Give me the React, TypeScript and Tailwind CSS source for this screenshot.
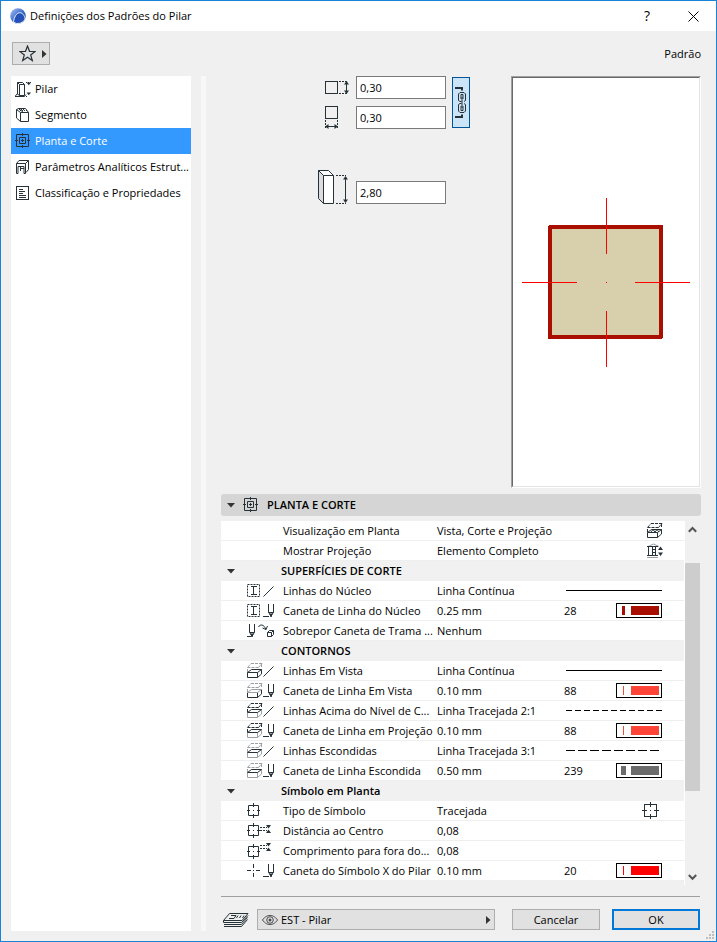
import { useState, ReactNode } from 'react';

const INK = '#263238';
const FAINT = '#9aa0a4';

const AppLogo = () => (
  <svg width="16" height="16" viewBox="0 0 16 16" aria-hidden="true">
    <defs>
      <linearGradient id="logo" x1="0" y1="0" x2="1" y2="1">
        <stop offset="0" stopColor="#a9c3f2" />
        <stop offset="0.5" stopColor="#3f6fd0" />
        <stop offset="1" stopColor="#16348f" />
      </linearGradient>
    </defs>
    <circle cx="8" cy="8" r="7.8" fill="url(#logo)" />
    <path
      d="M3.500 14.200C4 9 6.500 5 9.500 4.800c3.200-.2 5 2.700 5.700 6.200A8 8 0 0 1 3.500 14.200z"
      fill="#2450b8"
      stroke="#fff"
      strokeWidth="0.900"
    />
  </svg>
);

const Triangle = ({ down = false }: { down?: boolean }) => (
  <svg width="8" height="8" viewBox="0 0 8 8" fill="#333" aria-hidden="true">
    {down ? <path d="M0 2h8L4 6.500z" /> : <path d="M2 0v8l4.500-4z" />}
  </svg>
);

const StarIcon = () => (
  <svg width="17" height="17" viewBox="0 0 17 17" fill="none" stroke={INK} strokeWidth="1.200" aria-hidden="true">
    <path d="M8.500 1l2 5.300 5.600.2-4.400 3.500 1.600 5.500-4.800-3.200-4.800 3.200 1.600-5.500L.9 6.500l5.600-.2z" />
  </svg>
);

const ColumnIcon = () => (
  <svg width="16" height="16" viewBox="0 0 16 16" fill="none" stroke={INK} aria-hidden="true">
    <path d="M2.500 13V1.500h5l2 2v11h-5zM4.500 14.500v-11h5M4.500 3.500l-2-2M2.500 13H2L0 15.500h9.500l1.500-2" />
    <path d="M11 1.500h5M11 15.500h2" strokeDasharray="1 1" />
    <path d="M11.500 1.500h4.500l-2.200 2.700zM11.500 11.500h4.500l-2.200 2.700z" fill={INK} stroke="none" />
  </svg>
);

const SegmentIcon = () => (
  <svg width="16" height="16" viewBox="0 0 16 16" fill="none" stroke={INK} aria-hidden="true">
    <path d="M5.500 5.500h8v9h-8zM5.500 14.500l-4-3.500V2.500l4 3M1.500 2.500l2-1h7l3 4M3.500 1.500l5 4" />
    <path d="M4 2.500h6M5 3.500h7" strokeDasharray="1 1" />
  </svg>
);

const PlanIcon = () => (
  <svg width="16" height="16" viewBox="0 0 16 16" fill="none" stroke={INK} aria-hidden="true">
    <path d="M1.500 1.500h12v12h-12zM4.500 4.500h6v6h-6zM7.500 0v3M7.500 12v3M0 7.500h3M12 7.500h3M6 7.500h3M7.500 6v3" />
  </svg>
);

const FrameIcon = () => (
  <svg width="16" height="16" viewBox="0 0 16 16" fill="none" stroke={INK} aria-hidden="true">
    <path d="M1.500 4.500l2.500-3h9.500v9l-2.500 3M1.500 4.500h9v10h-1.500v-7h-6v7H1.500zM10.500 4.500l3-3M5.500 8v4M5.500 9.500H9" />
  </svg>
);

const ListIcon = () => (
  <svg width="16" height="16" viewBox="0 0 16 16" fill="none" stroke={INK} shapeRendering="crispEdges" aria-hidden="true">
    <path d="M1.500 1.500h12v13h-12zM4 4.500h4M4 6.500h6M4 8.500h4M4 10.500h7M4 12.500h7" />
  </svg>
);

const DepthIcon = () => (
  <svg width="24" height="15" viewBox="0 0 24 15" fill="none" stroke={INK} aria-hidden="true">
    <path d="M.5 1.500h12v12H.5z" shapeRendering="crispEdges" />
    <path d="M14 1.500h9M14 13.500h9" strokeDasharray="2 1" />
    <path d="M21.500 2v11" />
    <path d="M21.500 1l2.500 3.500h-5zM21.500 14l2.500-3.500h-5z" fill={INK} stroke="none" />
  </svg>
);

const WidthIcon = () => (
  <svg width="24" height="23" viewBox="0 0 24 23" fill="none" stroke={INK} aria-hidden="true">
    <path d="M.5.5h12v12H.5z" shapeRendering="crispEdges" />
    <path d="M.5 14v9M12.500 14v9" strokeDasharray="2 1" />
    <path d="M1 20.500h11" />
    <path d="M0 20.500l3.500-2.500v5zM13 20.500l-3.500-2.500v5z" fill={INK} stroke="none" />
  </svg>
);

const HeightIcon = () => (
  <svg width="32" height="35" viewBox="0 0 32 35" stroke={INK} aria-hidden="true">
    <path d="M1.500 1.500l5 5v28l-5-5z" fill="#dcdcdc" />
    <path d="M1.500 1.500h10l5 5h-10z" fill="#fff" />
    <path d="M6.500 6.500h10v28h-10z" fill="#fff" />
    <path d="M19 6.500h10M19 34.500h10" strokeDasharray="2 1" fill="none" />
    <path d="M28.500 8v25" fill="none" />
    <path d="M28.500 7l2.500 3.500h-5zM28.500 34l2.500-3.500h-5z" fill={INK} stroke="none" />
  </svg>
);

const ChainIcon = () => (
  <svg width="14" height="35" viewBox="0 0 14 35" fill="none" stroke={INK} aria-hidden="true">
    <path d="M1 3h7v2.500M1 32h7v-2.500" strokeWidth="2" />
    <path d="M7.500 16.500H6l-1.500-1V9L6 7.500h4L11.500 9v6.500l-1.500 1M7.500 18.500H6l-1.500 1V26l1.500 1.500h4l1.500-1.500v-6.500l-1.500-1" />
    <path d="M7 14V9.500h2V14M7 21v4.500h2V21M8 12v11" />
  </svg>
);

const RowIcon = ({ children }: { children: ReactNode }) => (
  <svg width="28" height="16" viewBox="0 0 28 16" fill="none" stroke={INK} className="block" aria-hidden="true">
    {children}
  </svg>
);

const Core = () => (
  <>
    <path d="M.5 1.500h12v12H.5z" strokeDasharray="2 1" />
    <path d="M4 3.500h6M6.500 3.500v8M4 11.500h6" />
  </>
);

const Stroke = () => <path d="M16.500 13.500l10-10" />;

const Pen = () => (
  <>
    <path d="M21.500 1v8l2 3.500h1l2-3.500V1M16 13.500h6M21.500 9.500h5" />
    <path d="M23 11h2l-1 3z" fill={INK} />
  </>
);

const Slab = ({ top = FAINT, base = FAINT, cut = INK }: { top?: string; base?: string; cut?: string }) => (
  <>
    <path d="M4 .5h11M.5 4.500h11M.5 4.500L4 .5M11.500 4.500L15 .5M.5 6v3M14.500 1v4" stroke={top} strokeDasharray="3 1" />
    <path d="M.5 9.500v5h10v-5M10.500 14.500l4-3.500V6.500" stroke={base} />
    <path d="M.5 9.500h10l4-3h-10z" stroke={cut} />
  </>
);

const Target = ({ y = 0 }: { y?: number }) => (
  <path d={`M1.500 ${y + 2.5}h10v10h-10zM6.500 ${y}v4M6.500 ${y + 11}v4M0 ${y + 7.5}h3M10 ${y + 7.5}h3M6 ${y + 7.5}h1`} />
);

const Spacing = ({ y }: { y: number }) => (
  <>
    <path d={`M13 ${y}.5h7M13 ${y + 3}.5h7`} strokeDasharray="2 1" />
    <path d={`M19 ${y - 2}h5l-2.500 3.500zM19 ${y + 6}h5l-2.500-3.500z`} fill={INK} stroke="none" />
  </>
);

const SlabChoiceIcon = () => (
  <svg width="16" height="16" viewBox="0 0 16 16" fill="none" stroke={INK} aria-hidden="true">
    <Slab top={INK} base={INK} />
    <path d="M4 9l2-2.500L8 9l2-2.500L12 9" />
  </svg>
);

const StoryIcon = () => (
  <svg width="16" height="16" viewBox="0 0 16 16" fill="none" stroke={INK} aria-hidden="true">
    <path d="M1 3.500L6.500 1 12 3.500" stroke={FAINT} />
    <path d="M0 3.500h11M1.500 3.500v9M0 12.500h11M5.500 3.500v9M8.500 3.500v9M5.500 6.500h3M5.500 9.500h3" />
    <path d="M0 14.500h11" stroke={FAINT} />
    <path d="M11 7h5l-2.500-3.500zM11 9.500h5L13.500 13z" fill={INK} stroke="none" />
  </svg>
);

const SymbolIcon = () => (
  <svg width="17" height="17" viewBox="0 0 17 17" fill="none" stroke={INK} shapeRendering="crispEdges" aria-hidden="true">
    <path d="M2.500 2.500h12v12h-12zM8.500 0v5M8.500 12v5M0 8.500h5M12 8.500h5M8 8.500h1" />
  </svg>
);

const LayersIcon = () => (
  <svg width="26" height="16" viewBox="0 0 26 16" fill="none" stroke={INK} aria-hidden="true">
    <path d="M6.500 1.500h18.500l-6 7H.5zM.5 8.500v2h18l6.500-7M1 12.500h17.500l6-7M1 14.500h17.500l6-7" />
    <path d="M8 3.500h5l-2 3H6M15 3.500l-1.500 2.500M18 3.500L16.500 6M21 3.500L19.500 6" />
  </svg>
);

const EyeIcon = () => (
  <svg width="16" height="12" viewBox="0 0 16 12" fill="none" stroke="#4a4a4a" aria-hidden="true">
    <path d="M.5 6C3 2.500 5.500 1.500 8 1.500S13 2.500 15.500 6C13 9.500 10.500 10.500 8 10.500S3 9.500.5 6z" />
    <circle cx="8" cy="6" r="3.300" />
    <circle cx="8" cy="6" r="1.500" fill="#4a4a4a" stroke="none" />
  </svg>
);

const Chevron = ({ up = false }: { up?: boolean }) => (
  <svg width="9" height="8" viewBox="0 0 9 8" fill="none" stroke="#555" strokeWidth="2" aria-hidden="true">
    {up ? <path d="M.8 5.800L4.500 2l3.700 3.800" /> : <path d="M.8 2l3.700 3.800L8.200 2" />}
  </svg>
);

const PenSample = ({ color, weight }: { color: string; weight: number }) => (
  <svg width="46" height="15" viewBox="0 0 46 15" shapeRendering="crispEdges" className="block" aria-hidden="true">
    <rect x="0.5" y="0.5" width="45" height="14" fill="#fff" stroke="#000" />
    <rect x={7 - Math.floor(weight / 2)} y="3" width={weight} height="9" fill={color} />
    <rect x="15" y="3" width="28" height="9" fill={color} />
  </svg>
);

const LineSample = ({ dash }: { dash?: string }) => (
  <svg width="96" height="1" viewBox="0 0 96 1" fill="none" shapeRendering="crispEdges" aria-hidden="true">
    <path d="M0 .5h96" stroke="#000" strokeDasharray={dash} />
  </svg>
);

interface Row {
  label: string;
  value: string;
  icon?: ReactNode;
  pen?: { index: number; color: string; weight: number };
  line?: string;
  choice?: ReactNode;
}

interface Group {
  title?: string;
  rows: Row[];
}

const groups: Group[] = [
  {
    rows: [
      { label: 'Visualização em Planta', value: 'Vista, Corte e Projeção', choice: <SlabChoiceIcon /> },
      { label: 'Mostrar Projeção', value: 'Elemento Completo', choice: <StoryIcon /> },
    ],
  },
  {
    title: 'SUPERFÍCIES DE CORTE',
    rows: [
      { label: 'Linhas do Núcleo', value: 'Linha Contínua', icon: <><Core /><Stroke /></>, line: 'none' },
      { label: 'Caneta de Linha do Núcleo', value: '0.25 mm', icon: <><Core /><Pen /></>, pen: { index: 28, color: '#a80f00', weight: 3 } },
      {
        label: 'Sobrepor Caneta de Trama ...',
        value: 'Nenhum',
        icon: (
          <>
            <path d="M2.500 1v8l2 3.500h1l2-3.500V1M0 13.500h4M2.500 9.500h5" />
            <path d="M4 11h2l-1 3z" fill={INK} />
            <path d="M11.500 4c1.500-3 5.500-3 7.500 2.500M15.500 5l3.500 1.500L20.500 3M20.500 9.500h4v4h-4zM20.500 9.500l2-2h4v4l-2 2M24.500 9.500l2-2" />
          </>
        ),
      },
    ],
  },
  {
    title: 'CONTORNOS',
    rows: [
      { label: 'Linhas Em Vista', value: 'Linha Contínua', icon: <><Slab base={INK} /><Stroke /></>, line: 'none' },
      { label: 'Caneta de Linha Em Vista', value: '0.10 mm', icon: <><Slab base={INK} cut={FAINT} /><Pen /></>, pen: { index: 88, color: '#ff4538', weight: 1 } },
      { label: 'Linhas Acima do Nível de C...', value: 'Linha Tracejada 2:1', icon: <><Slab top={INK} /><Stroke /></>, line: '6 3' },
      { label: 'Caneta de Linha em Projeção', value: '0.10 mm', icon: <><Slab top={INK} /><Pen /></>, pen: { index: 88, color: '#ff4538', weight: 1 } },
      { label: 'Linhas Escondidas', value: 'Linha Tracejada 3:1', icon: <><Slab /><Stroke /></>, line: '9 3' },
      { label: 'Caneta de Linha Escondida', value: '0.50 mm', icon: <><Slab /><Pen /></>, pen: { index: 239, color: '#6b6b6b', weight: 5 } },
    ],
  },
  {
    title: 'Símbolo em Planta',
    rows: [
      { label: 'Tipo de Símbolo', value: 'Tracejada', icon: <Target />, choice: <span className="mr-1"><SymbolIcon /></span> },
      { label: 'Distância ao Centro', value: '0,08', icon: <><Target /><Spacing y={4} /></> },
      { label: 'Comprimento para fora do...', value: '0,08', icon: <><Target y={1} /><Spacing y={2} /></> },
      {
        label: 'Caneta do Símbolo X do Pilar',
        value: '0.10 mm',
        icon: <><path d="M0 7.500h4M9 7.500h4M6.500 1v4M6.500 10v4M6 7.500h1" /><Pen /></>,
        pen: { index: 20, color: '#ff0000', weight: 1 },
      },
    ],
  },
];

const pages = [
  { name: 'Pilar', icon: <ColumnIcon /> },
  { name: 'Segmento', icon: <SegmentIcon /> },
  { name: 'Planta e Corte', icon: <PlanIcon /> },
  { name: 'Parâmetros Analíticos Estrut...', icon: <FrameIcon /> },
  { name: 'Classificação e Propriedades', icon: <ListIcon /> },
];

const PropertyRow = ({ row }: { row: Row }) => (
  <tr className="h-5 bg-white">
    <td className="border-b border-[#efefef] pl-[26px]">{row.icon && <RowIcon>{row.icon}</RowIcon>}</td>
    <th scope="row" className="border-b border-[#efefef] text-left font-normal">{row.label}</th>
    <td className="border-b border-[#efefef]">{row.value}</td>
    {row.pen ? (
      <>
        <td className="border-b border-[#efefef]">{row.pen.index}</td>
        <td className="border-b border-[#efefef]">
          <PenSample color={row.pen.color} weight={row.pen.weight} />
        </td>
      </>
    ) : (
      <td colSpan={2} className={`border-b border-[#efefef] ${row.choice ? 'pr-[21px]' : 'pr-[22px]'}`}>
        <div className="flex items-center justify-end">
          {row.line && <LineSample dash={row.line} />}
          {row.choice}
        </div>
      </td>
    )}
  </tr>
);

const PropertyGroup = ({ group }: { group: Group }) => {
  const [open, setOpen] = useState(true);

  return (
    <tbody>
      {group.title && (
        <tr className="h-5 bg-[#f1f1f1]">
          <th colSpan={5} scope="rowgroup" className="text-left">
            <button
              onClick={() => setOpen(!open)}
              aria-expanded={open}
              className="flex h-5 w-full items-center pl-[6px] font-semibold"
            >
              <Triangle down={open} />
              <span className="ml-[46px]">{group.title}</span>
            </button>
          </th>
        </tr>
      )}
      {open && group.rows.map((row) => <PropertyRow key={row.label} row={row} />)}
    </tbody>
  );
};

const SizeInput = ({ label, initial }: { label: string; initial: string }) => (
  <input
    type="text"
    aria-label={label}
    defaultValue={initial}
    className="h-[23px] w-[90px] border border-[#7a7a7a] bg-white px-[3px] outline-none"
  />
);

const Preview = () => (
  <div className="w-[190px] border border-t-[#a0a0a0] border-r-white border-b-white border-l-[#a0a0a0]">
    <div className="flex h-full items-center justify-center border border-t-[#696969] border-r-[#e3e3e3] border-b-[#e3e3e3] border-l-[#696969] bg-white">
      <svg width="170" height="170" viewBox="0 0 170 170" fill="none" shapeRendering="crispEdges" role="img" aria-label="Planta do pilar">
        <rect x="29" y="30" width="111" height="110" fill="#d8cfad" stroke="#a80f00" strokeWidth="4" strokeLinejoin="round" />
        <path d="M1 85.500h55M114 85.500h55M85.500 1v56M85.500 114v56M85 85.500h1" stroke="#ff0000" />
      </svg>
    </div>
  </div>
);

const App = () => {
  const [page, setPage] = useState('Planta e Corte');

  return (
    <div className="relative flex min-h-screen flex-col border border-[#1883d7] bg-[#f0f0f0] font-['Open_Sans','Noto_Sans',sans-serif] text-[11px] leading-4 text-black">
      <header className="flex h-[30px] items-center bg-white pl-[9px]">
        <AppLogo />
        <h1 className="ml-1 flex-1">Definições dos Padrões do Pilar</h1>
        <button aria-label="Ajuda" className="h-full w-[46px] text-[14px]">?</button>
        <button aria-label="Fechar" className="flex h-full w-[46px] items-center justify-center">
          <svg width="11" height="11" viewBox="0 0 11 11" stroke="#000" aria-hidden="true">
            <path d="M.5.5l10 10M10.500.5l-10 10" />
          </svg>
        </button>
      </header>

      <div className="flex h-[45px] items-center justify-between pr-[15px] pl-[11px]">
        <button aria-label="Favoritos" className="flex h-[23px] w-[38px] items-center gap-1 border border-[#adadad] bg-[#e1e1e1] pl-[6px]">
          <StarIcon />
          <Triangle />
        </button>
        <span>Padrão</span>
      </div>

      <div className="flex flex-1 pr-[15px] pb-[10px] pl-[10px]">
        <nav className="w-[180px] bg-white">
          {pages.map(({ name, icon }) => (
            <button
              key={name}
              onClick={() => setPage(name)}
              className={`flex h-[26px] w-full items-center gap-1 pl-1 whitespace-nowrap ${page === name ? 'bg-[#3399ff] text-white' : ''}`}
            >
              {icon}
              {name}
            </button>
          ))}
        </nav>
        <div className="mx-[10px] w-[5px] bg-[#f8f8f8]" />

        <main className="ml-[5px] flex min-w-0 flex-1 flex-col">
          <div className="flex min-h-[412px] justify-between">
            <div className="pl-[96px]">
              <div className="flex items-center gap-[6px]">
                <div className="flex flex-col gap-[7px]">
                  <div className="flex items-center gap-[7px] pl-2">
                    <DepthIcon />
                    <SizeInput label="Profundidade" initial="0,30" />
                  </div>
                  <div className="flex items-center gap-[7px] pl-2">
                    <WidthIcon />
                    <SizeInput label="Largura" initial="0,30" />
                  </div>
                </div>
                <button
                  aria-label="Vincular dimensões"
                  aria-pressed="true"
                  className="flex h-[51px] w-[18px] items-center justify-center border border-[#005499] bg-[#cce4f7]"
                >
                  <ChainIcon />
                </button>
              </div>
              <div className="mt-10 flex items-end gap-[7px]">
                <HeightIcon />
                <SizeInput label="Altura" initial="2,80" />
              </div>
            </div>
            <Preview />
          </div>

          <h2 className="mt-[6px] flex h-[22px] items-center rounded-[3px] bg-[#d5d5d5] pl-[6px] font-semibold">
            <Triangle down />
            <span className="mr-2 ml-2"><PlanIcon /></span>
            PLANTA E CORTE
          </h2>

          <div className="mt-[5px] mr-px flex">
            <div className="min-w-0 flex-1 pb-1">
              <table className="w-full table-fixed border-separate border-spacing-0 whitespace-nowrap">
                <colgroup>
                  <col className="w-[62px]" />
                  <col className="w-[154px]" />
                  <col />
                  <col className="w-[52px]" />
                  <col className="w-[68px]" />
                </colgroup>
                {groups.map((group, i) => (
                  <PropertyGroup key={i} group={group} />
                ))}
              </table>
            </div>
            <div className="flex w-4 flex-col border-l border-white">
              <button aria-label="Rolar para cima" className="flex h-[42px] justify-center pt-[5px]">
                <Chevron up />
              </button>
              <div className="h-[228px] bg-[#cdcdcd]" />
              <button aria-label="Rolar para baixo" className="flex flex-1 items-end justify-center pb-1">
                <Chevron />
              </button>
            </div>
          </div>

          <footer className="mt-[11px] mr-px flex items-center border-t border-[#a0a0a0] pt-3">
            <span className="ml-[2px]"><LayersIcon /></span>
            <label className="ml-2 flex h-[21px] flex-1 items-center border border-[#adadad] bg-[#e1e1e1] pr-[2px] pl-1">
              <EyeIcon />
              <select aria-label="Camada" className="ml-[3px] flex-1 appearance-none bg-transparent outline-none">
                <option>EST - Pilar</option>
              </select>
              <Triangle />
            </label>
            <button className="ml-[17px] h-[21px] w-[88px] border border-[#adadad] bg-[#e1e1e1]">Cancelar</button>
            <button className="ml-3 h-[21px] w-[88px] border-2 border-[#0078d7] bg-[#e1e1e1]">OK</button>
          </footer>
        </main>
      </div>

      <svg width="8" height="8" viewBox="0 0 8 8" fill="#bfbfbf" className="absolute right-[2px] bottom-[2px]" aria-hidden="true">
        <path d="M6 0h2v2H6zM3 3h2v2H3zM6 3h2v2H6zM0 6h2v2H0zM3 6h2v2H3zM6 6h2v2H6z" />
      </svg>
    </div>
  );
};

export default App;
